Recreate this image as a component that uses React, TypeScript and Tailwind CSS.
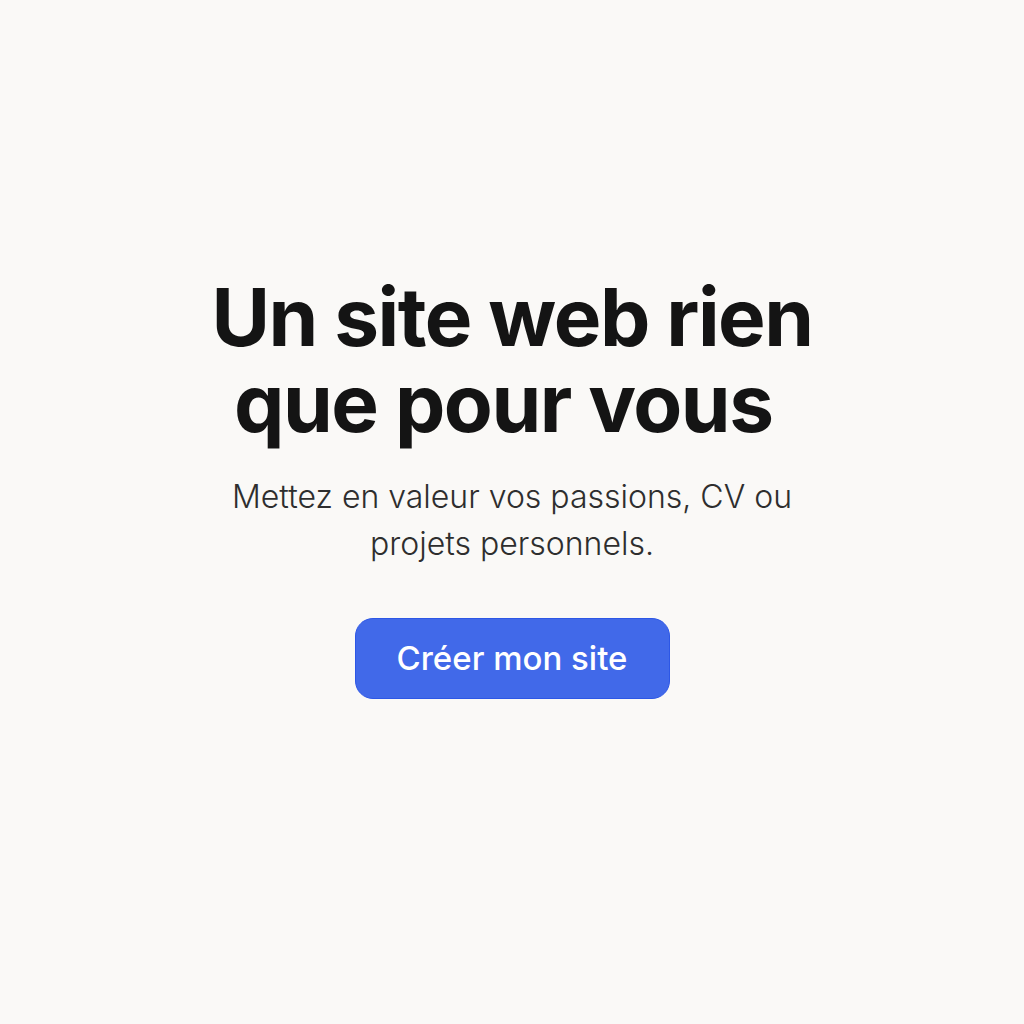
export default function App() {
  return (
    <div className="min-h-[1024px] w-full bg-[#faf9f7] flex flex-col items-center pt-[274px]" style={{ fontFamily: "Inter, 'Noto Sans', sans-serif" }}>
      <h1 className="text-[80px] leading-[86px] font-bold text-[#141414] text-center tracking-[-1.5px] w-[680px] whitespace-pre-line">
        {"Un site web rien\nque pour vous\u00a0"}
      </h1>
      <p className="mt-[27px] text-[32px] leading-[47px] font-light text-[#2e2e2e] text-center w-[620px]">
        Mettez en valeur vos passions, CV ou projets personnels.
      </p>
      <button className="mt-[51px] w-[315px] h-[81px] rounded-[18px] bg-[#4169e9] border border-[#2d57e6] text-white text-[33px] font-medium">
        Créer mon site
      </button>
    </div>
  );
}
